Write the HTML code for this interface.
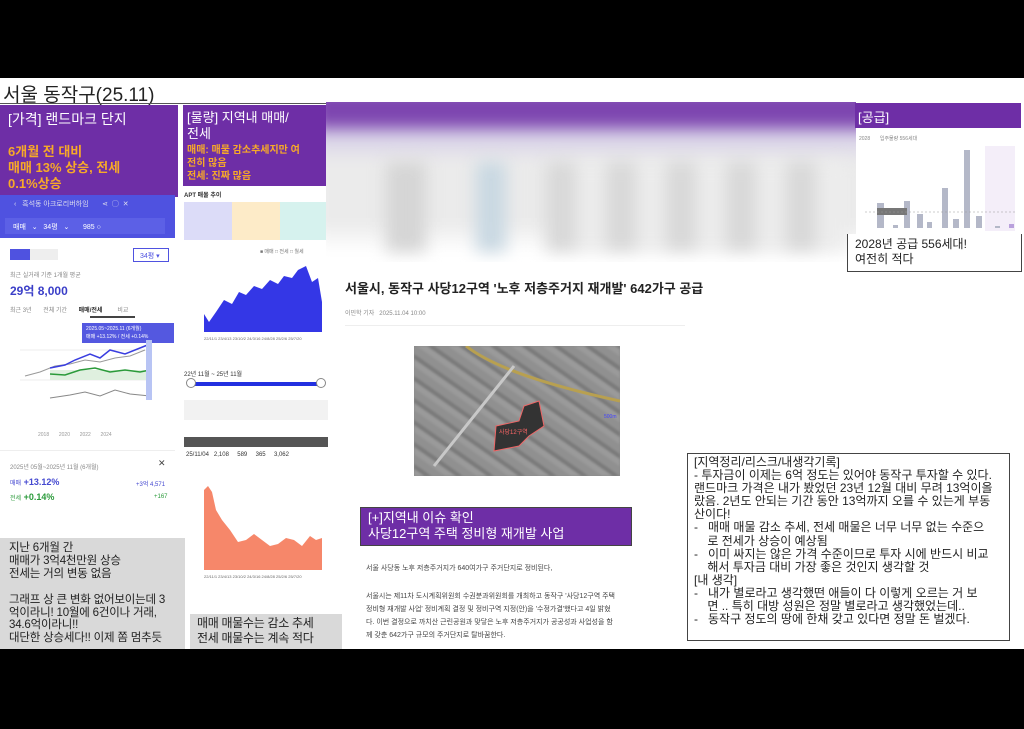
<!DOCTYPE html>
<html><head><meta charset="utf-8"><style>
*{margin:0;padding:0;box-sizing:border-box}
body{width:1024px;height:729px;background:#000;position:relative;overflow:hidden;font-family:"Liberation Sans","Noto Sans CJK KR",sans-serif}
.a{position:absolute}
.main{left:0;top:78px;width:1024px;height:571px;background:#fff}
.or{color:#f7a928;font-weight:bold}
.sm{font-size:6px;color:#888}
</style></head><body>
<div class="a main"></div>
<div class="a" style="left:3px;top:80px;font-size:19px;color:#222">서울 동작구(25.11)</div>
<div class="a" style="left:0;top:103px;width:330px;height:1px;background:#555"></div>

<div class="a" style="left:0;top:105px;width:178px;height:92px;background:#6e2ea6"></div>
<div class="a" style="left:8px;top:109px;font-size:14px;color:#fff">[가격] 랜드마크 단지</div>
<div class="a or" style="left:8px;top:144px;font-size:13px;line-height:16px">6개월 전 대비<br>매매 13% 상승, 전세<br>0.1%상승</div>
<div class="a" style="left:0;top:195px;width:175px;height:43px;background:#4f52e0"></div>
<div class="a" style="left:14px;top:199px;font-size:7px;color:#dde;white-space:nowrap">‹ &nbsp; 흑석동 아크로리버하임 &nbsp; &nbsp; &nbsp; ⋖ &nbsp;◯ &nbsp;✕</div>
<div class="a" style="left:5px;top:218px;width:160px;height:16px;background:#5c60e6;font-size:7px;color:#fff;padding:4px 8px;white-space:nowrap">매매 &nbsp; ⌄ &nbsp; 34평 &nbsp; ⌄ &nbsp; &nbsp; &nbsp; 985 ○</div>
<div class="a" style="left:10px;top:249px;width:20px;height:11px;background:#4f52e0"></div>
<div class="a" style="left:30px;top:249px;width:28px;height:11px;background:#eee"></div>
<div class="a" style="left:133px;top:248px;width:36px;height:14px;border:1px solid #4f52e0;font-size:7px;color:#4f52e0;padding:2px 6px">34평 ▾</div>
<div class="a sm" style="left:10px;top:270px">최근 실거래 기준 1개월 평균</div>
<div class="a" style="left:10px;top:282px;font-size:12px;font-weight:bold;color:#3a3ec8">29억 8,000</div>
<div class="a sm" style="left:10px;top:305px;white-space:nowrap">최근 3년 &nbsp; &nbsp; &nbsp; 전체 기간 &nbsp; &nbsp; &nbsp; <b style="color:#333">매매/전세</b> &nbsp; &nbsp; &nbsp; &nbsp; 비교</div>
<div class="a" style="left:90px;top:316px;width:45px;height:2px;background:#444"></div>
<div class="a" style="left:82px;top:323px;width:92px;height:20px;background:#5458e0;font-size:5px;color:#fff;padding:2px 4px;line-height:8px">2025.05~2025.11 (6개월)<br>매매 +13.12% / 전세 +0.14%</div>
<svg class="a" style="left:0;top:340px" width="175" height="100">
<line x1="20" y1="10" x2="150" y2="10" stroke="#eee"/><line x1="20" y1="40" x2="150" y2="40" stroke="#eee"/>
<polyline points="25,36 40,32 55,26 70,24 85,20 100,22 115,18 130,16 145,10" fill="none" stroke="#999"/>
<polyline points="50,28 65,25 75,20 90,14 100,18 110,10 125,14 140,8 150,4" fill="none" stroke="#3a3ee0" stroke-width="1.5"/>
<rect x="50" y="30" width="100" height="10" fill="#dff0df"/>
<polyline points="50,34 65,35 80,30 95,28 110,32 125,30 140,32 150,30" fill="none" stroke="#2a9a3a" stroke-width="1.5"/>
<polyline points="50,58 70,55 85,52 100,56 115,50 130,54 150,56" fill="none" stroke="#888"/>
<rect x="146" y="0" width="6" height="60" fill="#b8c4f4"/>
<text x="38" y="96" font-size="5" fill="#999">2018 &#160; &#160; &#160; 2020 &#160; &#160; &#160; 2022 &#160; &#160; &#160; 2024</text>
</svg>
<div class="a" style="left:0;top:450px;width:175px;height:1px;background:#eee"></div>
<div class="a sm" style="left:10px;top:462px">2025년 05월~2025년 11월 (6개월)</div>
<div class="a" style="left:158px;top:458px;font-size:9px;color:#444">✕</div>
<div class="a" style="left:10px;top:477px;font-size:9px;color:#4448d0"><span style="font-size:6px">매매</span> <b>+13.12%</b></div>
<div class="a" style="left:136px;top:479px;font-size:6px;color:#4448d0">+3억 4,571</div>
<div class="a" style="left:10px;top:492px;font-size:9px;color:#2a9a3a"><span style="font-size:6px">전세</span> <b>+0.14%</b></div>
<div class="a" style="left:154px;top:494px;font-size:6px;color:#2a9a3a">+167</div>
<div class="a" style="left:0;top:538px;width:185px;height:111px;background:#d9d9d9"></div>
<div class="a" style="left:9px;top:542px;font-size:11.5px;line-height:12.9px;color:#222;white-space:nowrap;letter-spacing:-0.2px">지난 6개월 간<br>매매가 3억4천만원 상승<br>전세는 거의 변동 없음<br><br>그래프 상 큰 변화 없어보이는데 3<br>억이라니! 10월에 6건이나 거래,<br>34.6억이라니!!<br>대단한 상승세다!! 이제 쫌 멈추듯</div>

<div class="a" style="left:183px;top:105px;width:145px;height:81px;background:#6e2ea6"></div>
<div class="a" style="left:187px;top:110px;font-size:13px;line-height:16px;color:#fff">[물량] 지역내 매매/<br>전세</div>
<div class="a or" style="left:187px;top:144px;font-size:10px;line-height:13px;white-space:nowrap">매매: 매물 감소추세지만 여<br>전히 많음<br>전세: 진짜 많음</div>
<div class="a" style="left:184px;top:190px;font-size:6px;color:#333;font-weight:bold">APT 매물 추이</div>
<div class="a" style="left:184px;top:202px;width:48px;height:38px;background:#dcdcf8"></div>
<div class="a" style="left:232px;top:202px;width:48px;height:38px;background:#fdebc8"></div>
<div class="a" style="left:280px;top:202px;width:48px;height:38px;background:#d6f2ee"></div>
<div class="a" style="left:260px;top:248px;font-size:5px;color:#777">■ 매매 □ 전세 □ 월세</div>
<svg class="a" style="left:184px;top:262px" width="144" height="80">
<path d="M20,52 L25,60 L32,50 L40,38 L48,42 L55,30 L62,33 L70,24 L78,27 L86,18 L94,22 L100,14 L108,16 L114,8 L122,4 L128,20 L134,16 L138,40 L138,70 L20,70 Z" fill="#3437e6"/>
<text x="20" y="78" font-size="4" fill="#666">22/11/1 23/4/13 23/10/2 24/3/16 24/8/28 25/2/6 25/7/20</text>
</svg>
<div class="a" style="left:184px;top:369px;font-size:6px;color:#333">22년 11월 ~ 25년 11월</div>
<div class="a" style="left:190px;top:382px;width:130px;height:4px;background:#2230e0"></div>
<div class="a" style="left:186px;top:378px;width:10px;height:10px;border-radius:50%;background:#fff;border:1px solid #888"></div>
<div class="a" style="left:316px;top:378px;width:10px;height:10px;border-radius:50%;background:#fff;border:1px solid #888"></div>
<div class="a" style="left:184px;top:400px;width:144px;height:20px;background:#f2f2f2"></div>
<div class="a" style="left:184px;top:437px;width:144px;height:10px;background:#555"></div>
<div class="a" style="left:186px;top:452px;font-size:6px;color:#333;white-space:nowrap">25/11/04 &nbsp; 2,108 &nbsp; &nbsp; 589 &nbsp; &nbsp; 365 &nbsp; &nbsp; 3,062</div>
<svg class="a" style="left:184px;top:480px" width="144" height="100">
<path d="M20,10 L24,6 L28,12 L32,30 L38,40 L46,50 L54,62 L62,60 L70,54 L78,60 L86,66 L94,64 L102,58 L110,60 L118,66 L126,56 L132,60 L138,58 L138,90 L20,90 Z" fill="#f6876a"/>
<text x="20" y="98" font-size="4" fill="#666">22/11/1 23/4/13 23/10/2 24/3/16 24/8/28 25/2/6 25/7/20</text>
</svg>
<div class="a" style="left:190px;top:614px;width:152px;height:35px;background:#d9d9d9"></div>
<div class="a" style="left:197px;top:616px;font-size:12px;line-height:14.5px;color:#222;white-space:nowrap;letter-spacing:-0.3px">매매 매물수는 감소 추세<br>전세 매물수는 계속 적다</div>

<div class="a" style="left:326px;top:102px;width:530px;height:160px;overflow:hidden;background:#eee">
<div class="a" style="left:-10px;top:-10px;width:560px;height:190px;filter:blur(6px);background:linear-gradient(#7d45b0 0,#7d45b0 28px,#d8d2e8 45px,#ebebeb 70px,#ebebeb 130px,#fff 160px)"></div>
<div class="a" style="left:60px;top:60px;width:40px;height:90px;background:#d5d5d5;filter:blur(8px)"></div>
<div class="a" style="left:150px;top:60px;width:30px;height:90px;background:#c9d8e2;filter:blur(8px)"></div>
<div class="a" style="left:220px;top:60px;width:300px;height:90px;background:repeating-linear-gradient(90deg,#d8d8d8 0 30px,#ececec 30px 60px);filter:blur(8px)"></div>
</div>

<div class="a" style="left:345px;top:278px;font-size:13px;font-weight:bold;color:#222;white-space:nowrap">서울시, 동작구 사당12구역 '노후 저층주거지 재개발' 642가구 공급</div>
<div class="a sm" style="left:345px;top:308px">이민학 기자 &nbsp; 2025.11.04 10:00</div>
<div class="a" style="left:345px;top:325px;width:340px;height:1px;background:#eee"></div>
<div class="a" style="left:414px;top:346px;width:206px;height:130px;overflow:hidden;background:#888">
<div class="a" style="left:0;top:0;width:206px;height:130px;background:repeating-linear-gradient(35deg,#9a9a9a 0 6px,#7a7a7a 6px 10px,#909090 10px 18px);filter:blur(1px)"></div>
<svg class="a" style="left:0;top:0" width="206" height="130"><path d="M52,0 Q90,30 206,55" stroke="#b8a050" stroke-width="3" fill="none"/><path d="M20,120 L100,20" stroke="#c8c8c8" stroke-width="3" fill="none"/><path d="M82,80 L105,75 L110,60 L125,55 L130,80 L115,90 L105,100 L80,105 Z" fill="#333" stroke="#e66"/><text x="85" y="88" font-size="6" fill="#f66">사당12구역</text><text x="190" y="72" font-size="5" fill="#44f">500m</text></svg>
</div>
<div class="a" style="left:360px;top:507px;width:272px;height:39px;background:#6e2ea6;border:1px solid #444"></div>
<div class="a" style="left:368px;top:510px;font-size:13px;line-height:16px;color:#fff">[+]지역내 이슈 확인<br>사당12구역 주택 정비형 재개발 사업</div>
<div class="a" style="left:366px;top:563px;font-size:7px;color:#444">서울 사당동 노후 저층주거지가 640여가구 주거단지로 정비된다,</div>
<div class="a" style="left:366px;top:590px;font-size:7px;line-height:13px;color:#444;white-space:nowrap">서울시는 제11차 도시계획위원회 수권분과위원회를 개최하고 동작구 '사당12구역 주택<br>정비형 재개발 사업' 정비계획 결정 및 정비구역 지정(안)을 '수정가결'했다고 4일 밝혔<br>다. 이번 결정으로 까치산 근린공원과 맞닿은 노후 저층주거지가 공공성과 사업성을 함<br>께 갖춘 642가구 규모의 주거단지로 탈바꿈한다.</div>

<div class="a" style="left:855px;top:103px;width:166px;height:25px;background:#6e2ea6"></div>
<div class="a" style="left:858px;top:107px;font-size:13px;color:#fff">[공급]</div>
<svg class="a" style="left:855px;top:128px" width="166" height="106">
<rect x="130" y="18" width="30" height="85" fill="#f4eef9"/>
<text x="4" y="12" font-size="5" fill="#888">2028 &#160; &#160; &#160; 입주물량 556세대</text>
<g fill="#b4b8c8"><rect x="22" y="75" width="7" height="25"/><rect x="38" y="97" width="5" height="3"/><rect x="49" y="73" width="6" height="27"/><rect x="62" y="86" width="6" height="14"/><rect x="72" y="94" width="5" height="6"/><rect x="87" y="60" width="6" height="40"/><rect x="98" y="91" width="6" height="9"/><rect x="109" y="22" width="6" height="78"/><rect x="121" y="88" width="6" height="12"/><rect x="140" y="98" width="5" height="2"/></g>
<rect x="154" y="96" width="5" height="4" fill="#b9a0dc"/>
<rect x="22" y="80" width="30" height="7" fill="#777"/>
<line x1="10" y1="84" x2="160" y2="84" stroke="#999" stroke-dasharray="2,2" stroke-width=".5"/>
</svg>
<div class="a" style="left:847px;top:234px;width:175px;height:38px;border:1px solid #444;border-top:none;background:#fff"></div>
<div class="a" style="left:855px;top:237px;font-size:12px;line-height:15px;color:#222">2028년 공급 556세대!<br>여전히 적다</div>

<div class="a" style="left:687px;top:453px;width:323px;height:188px;border:1px solid #444"></div>
<div class="a" style="left:694px;top:456px;font-size:12px;line-height:13.1px;color:#222;white-space:nowrap;letter-spacing:0">[지역정리/리스크/내생각기록]<br>- 투자금이 이제는 6억 정도는 있어야 동작구 투자할 수 있다.<br>랜드마크 가격은 내가 봤었던 23년 12월 대비 무려 13억이올<br>랐음. 2년도 안되는 기간 동안 13억까지 오를 수 있는게 부동<br>산이다!<br>- &nbsp; 매매 매물 감소 추세, 전세 매물은 너무 너무 없는 수준으<br>&nbsp; &nbsp; 로 전세가 상승이 예상됨<br>- &nbsp; 이미 싸지는 않은 가격 수준이므로 투자 시에 반드시 비교<br>&nbsp; &nbsp; 해서 투자금 대비 가장 좋은 것인지 생각할 것<br>[내 생각]<br>- &nbsp; 내가 별로라고 생각했떤 애들이 다 이렇게 오르는 거 보<br>&nbsp; &nbsp; 면 .. 특히 대방 성원은 정말 별로라고 생각했었는데..<br>- &nbsp; 동작구 정도의 땅에 한채 갖고 있다면 정말 돈 벌겠다.</div>
</body></html>
